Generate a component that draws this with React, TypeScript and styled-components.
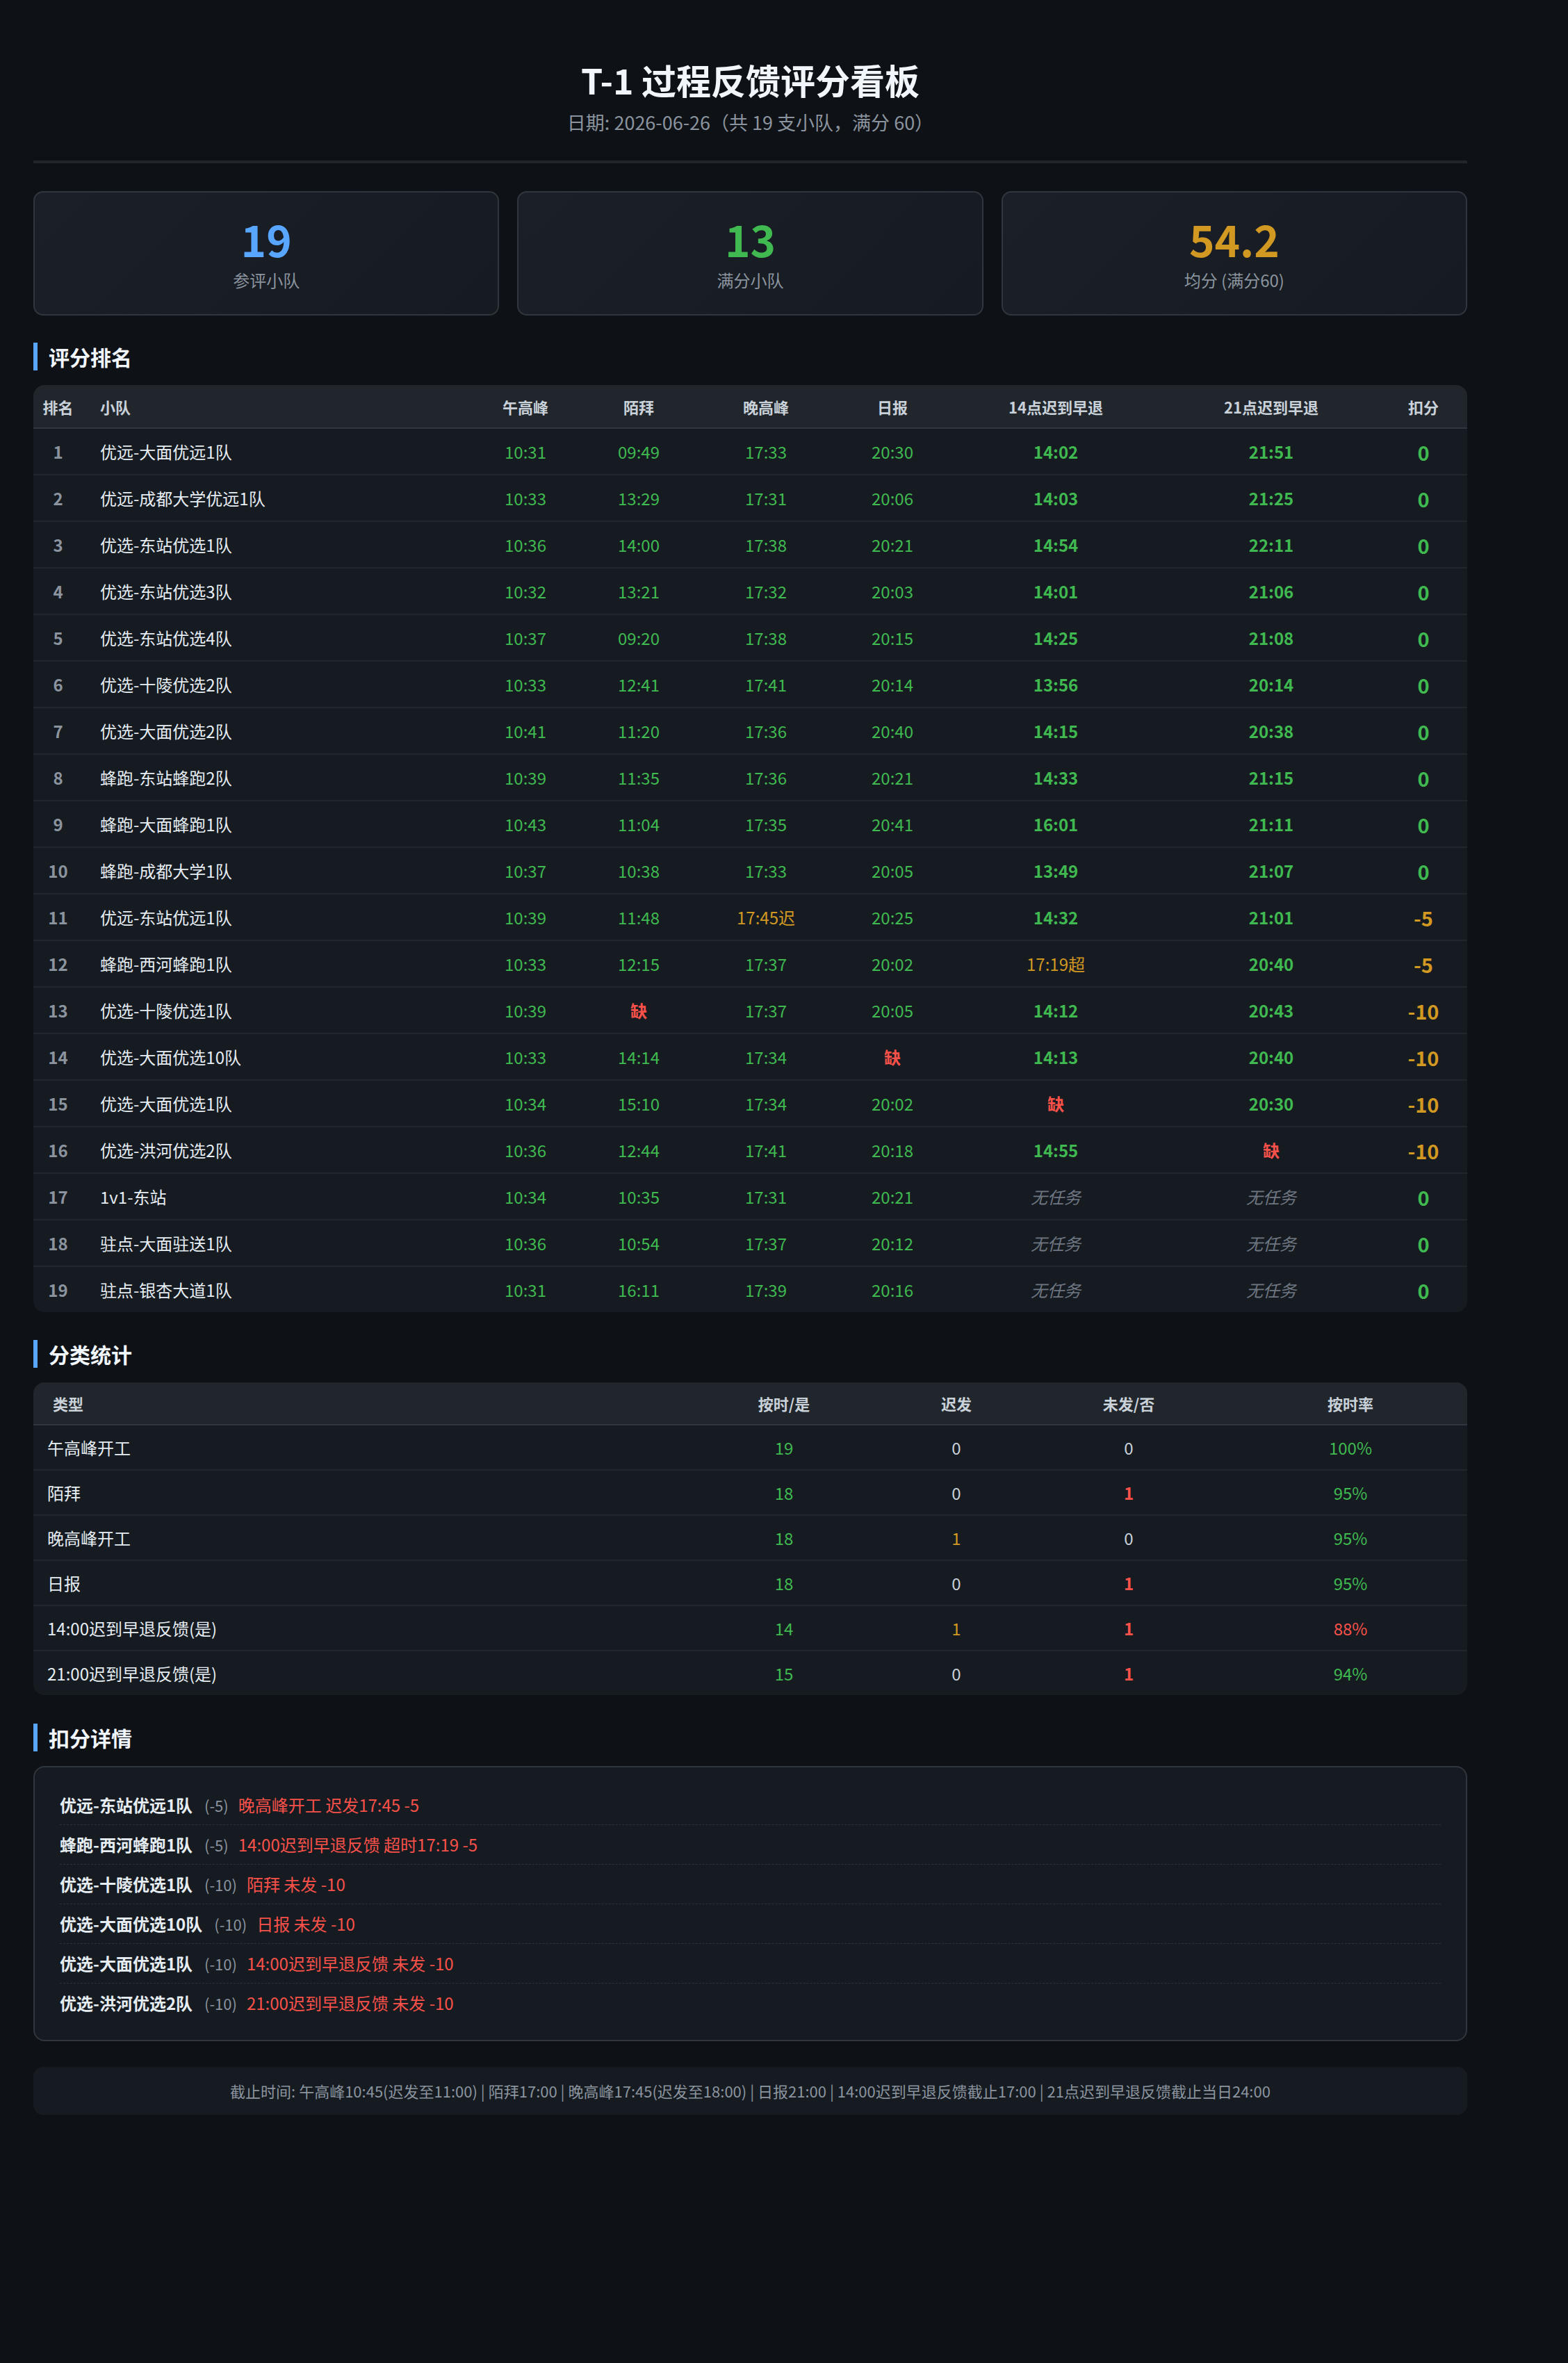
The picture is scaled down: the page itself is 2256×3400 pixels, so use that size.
import React from "react";
import styled, { createGlobalStyle } from "styled-components";

const GlobalStyle = createGlobalStyle`
  html, body {
    margin: 0;
    padding: 0;
    background: #0e1116;
    overflow: hidden;
  }
  body {
    font-family: "Noto Sans CJK SC", "Noto Sans", "Liberation Sans", sans-serif;
    color: #e6edf3;
  }
  * { box-sizing: border-box; }
`;

const C = {
  green: "#3fb950",
  orange: "#d29922",
  red: "#f85149",
  blue: "#58a6ff",
  gray: "#8b949e",
  dim: "#6e7681",
  text: "#e6edf3",
  head: "#c9d1d9",
};

const Page = styled.div`
  min-height: 3400px;
  background: #0e1116;
  padding: 0 0 0 48px;
`;

const Container = styled.div`
  width: 2063px;
`;

const Header = styled.header`
  padding: 82px 0 36px;
  border-bottom: 4px solid #21262d;
  text-align: center;
`;

const Title = styled.h1`
  margin: 0;
  font-size: 50px;
  line-height: 64px;
  font-weight: 700;
  color: #f0f6fc;
`;

const Subtitle = styled.div`
  margin-top: 11px;
  font-size: 27px;
  line-height: 38px;
  color: ${C.gray};
`;

const StatGrid = styled.div`
  margin-top: 40px;
  display: grid;
  grid-template-columns: repeat(3, 1fr);
  gap: 26px;
`;

const StatCard = styled.div`
  height: 179px;
  border: 2px solid #30363d;
  border-radius: 14px;
  background: linear-gradient(135deg, #1b2028 0%, #161b22 100%);
  padding-top: 28px;
  text-align: center;
`;

const StatValue = styled.div<{ $color: string }>`
  font-size: 62px;
  line-height: 76px;
  font-weight: 700;
  color: ${(p) => p.$color};
`;

const StatLabel = styled.div`
  margin-top: 4px;
  font-size: 24px;
  line-height: 36px;
  color: ${C.gray};
`;

const Section = styled.section<{ $mt?: number }>`
  margin-top: ${(p) => p.$mt ?? 40}px;
`;

const SectionTitle = styled.h2`
  margin: 0 0 21px;
  border-left: 6px solid ${C.blue};
  padding-left: 16px;
  font-size: 30px;
  line-height: 40px;
  font-weight: 700;
  color: #f0f6fc;
`;

const TableWrap = styled.div`
  background: #161b22;
  border-radius: 16px;
  overflow: hidden;
`;

const Table = styled.table`
  width: 100%;
  border-collapse: separate;
  border-spacing: 0;
  table-layout: fixed;
`;

const Th = styled.th<{ $align?: string; $pl?: number; $h: number }>`
  height: ${(p) => p.$h}px;
  background: #21262d;
  border-bottom: 2px solid #30363d;
  font-size: 22px;
  font-weight: 700;
  color: ${C.head};
  text-align: ${(p) => p.$align || "center"};
  padding: 0 0 0 ${(p) => p.$pl || 0}px;
  white-space: nowrap;
`;

const Tr = styled.tr<{ $h: number }>`
  td {
    height: ${(p) => p.$h}px;
    border-bottom: 2px solid #21262d;
  }
  &:last-child td {
    height: ${(p) => p.$h - 2}px;
    border-bottom: none;
  }
`;

const Td = styled.td<{
  $align?: string;
  $pl?: number;
  $color?: string;
  $weight?: number;
  $size?: number;
  $italic?: boolean;
}>`
  padding: 0 0 0 ${(p) => p.$pl || 0}px;
  text-align: ${(p) => p.$align || "center"};
  font-size: ${(p) => p.$size || 24}px;
  font-weight: ${(p) => p.$weight || 400};
  font-style: ${(p) => (p.$italic ? "italic" : "normal")};
  color: ${(p) => p.$color || C.text};
  white-space: nowrap;
`;

const DetailBox = styled.div`
  border: 2px solid #30363d;
  border-radius: 16px;
  background: #161b22;
  padding: 26px 36px 25px;
`;

const DetailItem = styled.div`
  display: flex;
  align-items: baseline;
  padding: 12px 0;
  line-height: 32px;
  &:not(:last-child) {
    border-bottom: 1px dashed #2d333b;
  }
`;

const DetailName = styled.span`
  font-size: 24px;
  font-weight: 700;
  color: ${C.text};
`;

const DetailPts = styled.span`
  margin: 0 14px 0 17px;
  font-size: 22px;
  color: ${C.gray};
`;

const DetailReason = styled.span`
  font-size: 24px;
  color: ${C.red};
`;

const Footer = styled.div`
  margin-top: 37px;
  background: #161b22;
  border-radius: 14px;
  padding: 16px;
  text-align: center;
  font-size: 22px;
  line-height: 37px;
  color: ${C.gray};
`;

type Cell = string;
type Rank = [number, string, Cell, Cell, Cell, Cell, Cell, Cell, number];

const ranks: Rank[] = [
  [1, "优远-大面优远1队", "10:31", "09:49", "17:33", "20:30", "14:02", "21:51", 0],
  [2, "优远-成都大学优远1队", "10:33", "13:29", "17:31", "20:06", "14:03", "21:25", 0],
  [3, "优选-东站优选1队", "10:36", "14:00", "17:38", "20:21", "14:54", "22:11", 0],
  [4, "优选-东站优选3队", "10:32", "13:21", "17:32", "20:03", "14:01", "21:06", 0],
  [5, "优选-东站优选4队", "10:37", "09:20", "17:38", "20:15", "14:25", "21:08", 0],
  [6, "优选-十陵优选2队", "10:33", "12:41", "17:41", "20:14", "13:56", "20:14", 0],
  [7, "优选-大面优选2队", "10:41", "11:20", "17:36", "20:40", "14:15", "20:38", 0],
  [8, "蜂跑-东站蜂跑2队", "10:39", "11:35", "17:36", "20:21", "14:33", "21:15", 0],
  [9, "蜂跑-大面蜂跑1队", "10:43", "11:04", "17:35", "20:41", "16:01", "21:11", 0],
  [10, "蜂跑-成都大学1队", "10:37", "10:38", "17:33", "20:05", "13:49", "21:07", 0],
  [11, "优远-东站优远1队", "10:39", "11:48", "17:45迟", "20:25", "14:32", "21:01", -5],
  [12, "蜂跑-西河蜂跑1队", "10:33", "12:15", "17:37", "20:02", "17:19超", "20:40", -5],
  [13, "优选-十陵优选1队", "10:39", "缺", "17:37", "20:05", "14:12", "20:43", -10],
  [14, "优选-大面优选10队", "10:33", "14:14", "17:34", "缺", "14:13", "20:40", -10],
  [15, "优选-大面优选1队", "10:34", "15:10", "17:34", "20:02", "缺", "20:30", -10],
  [16, "优选-洪河优选2队", "10:36", "12:44", "17:41", "20:18", "14:55", "缺", -10],
  [17, "1v1-东站", "10:34", "10:35", "17:31", "20:21", "无任务", "无任务", 0],
  [18, "驻点-大面驻送1队", "10:36", "10:54", "17:37", "20:12", "无任务", "无任务", 0],
  [19, "驻点-银杏大道1队", "10:31", "16:11", "17:39", "20:16", "无任务", "无任务", 0],
];

const rankCols = [71, 556, 162, 164, 202, 162, 308, 312, 126];
const rankHeads = ["排名", "小队", "午高峰", "陌拜", "晚高峰", "日报", "14点迟到早退", "21点迟到早退", "扣分"];

function cellStyle(v: string, bold: boolean) {
  if (v === "缺") return { $color: C.red, $weight: 700 };
  if (v === "无任务") return { $color: C.dim, $italic: true };
  if (v.endsWith("迟") || v.endsWith("超")) return { $color: C.orange };
  return { $color: C.green, $weight: bold ? 700 : 400 };
}

type Stat = [string, number, number, number, string];
const stats: Stat[] = [
  ["午高峰开工", 19, 0, 0, "100%"],
  ["陌拜", 18, 0, 1, "95%"],
  ["晚高峰开工", 18, 1, 0, "95%"],
  ["日报", 18, 0, 1, "95%"],
  ["14:00迟到早退反馈(是)", 14, 1, 1, "88%"],
  ["21:00迟到早退反馈(是)", 15, 0, 1, "94%"],
];
const statCols = [929, 302, 194, 302, 336];

const details: [string, string, string][] = [
  ["优远-东站优远1队", "(-5)", "晚高峰开工 迟发17:45 -5"],
  ["蜂跑-西河蜂跑1队", "(-5)", "14:00迟到早退反馈 超时17:19 -5"],
  ["优选-十陵优选1队", "(-10)", "陌拜 未发 -10"],
  ["优选-大面优选10队", "(-10)", "日报 未发 -10"],
  ["优选-大面优选1队", "(-10)", "14:00迟到早退反馈 未发 -10"],
  ["优选-洪河优选2队", "(-10)", "21:00迟到早退反馈 未发 -10"],
];

export default function App() {
  return (
    <Page>
      <GlobalStyle />
      <Container>
        <Header>
          <Title>T-1 过程反馈评分看板</Title>
          <Subtitle>日期: 2026-06-26（共 19 支小队，满分 60）</Subtitle>
        </Header>

        <StatGrid>
          <StatCard>
            <StatValue $color={C.blue}>19</StatValue>
            <StatLabel>参评小队</StatLabel>
          </StatCard>
          <StatCard>
            <StatValue $color={C.green}>13</StatValue>
            <StatLabel>满分小队</StatLabel>
          </StatCard>
          <StatCard>
            <StatValue $color={C.orange}>54.2</StatValue>
            <StatLabel>均分 (满分60)</StatLabel>
          </StatCard>
        </StatGrid>

        <Section $mt={39}>
          <SectionTitle>评分排名</SectionTitle>
          <TableWrap>
            <Table>
              <colgroup>
                {rankCols.map((w, i) => (
                  <col key={i} style={{ width: w }} />
                ))}
              </colgroup>
              <thead>
                <tr>
                  {rankHeads.map((h, i) => (
                    <Th key={h} $h={63} $align={i === 1 ? "left" : "center"} $pl={i === 1 ? 25 : 0}>
                      {h}
                    </Th>
                  ))}
                </tr>
              </thead>
              <tbody>
                {ranks.map((r) => (
                  <Tr key={r[0]} $h={67}>
                    <Td $color={C.gray} $weight={600}>
                      {r[0]}
                    </Td>
                    <Td $align="left" $pl={25}>
                      {r[1]}
                    </Td>
                    {[r[2], r[3], r[4], r[5]].map((v, i) => (
                      <Td key={i} {...cellStyle(v, false)}>
                        {v}
                      </Td>
                    ))}
                    {[r[6], r[7]].map((v, i) => (
                      <Td key={"b" + i} {...cellStyle(v, true)}>
                        {v}
                      </Td>
                    ))}
                    <Td $size={29} $weight={700} $color={r[8] === 0 ? C.green : C.orange}>
                      {r[8]}
                    </Td>
                  </Tr>
                ))}
              </tbody>
            </Table>
          </TableWrap>
        </Section>

        <Section $mt={40}>
          <SectionTitle>分类统计</SectionTitle>
          <TableWrap>
            <Table>
              <colgroup>
                {statCols.map((w, i) => (
                  <col key={i} style={{ width: w }} />
                ))}
              </colgroup>
              <thead>
                <tr>
                  <Th $h={62} $align="left" $pl={28}>
                    类型
                  </Th>
                  <Th $h={62}>按时/是</Th>
                  <Th $h={62}>迟发</Th>
                  <Th $h={62}>未发/否</Th>
                  <Th $h={62}>按时率</Th>
                </tr>
              </thead>
              <tbody>
                {stats.map((s) => (
                  <Tr key={s[0]} $h={65}>
                    <Td $align="left" $pl={20}>
                      {s[0]}
                    </Td>
                    <Td $color={C.green}>{s[1]}</Td>
                    <Td $color={s[2] > 0 ? C.orange : C.head}>{s[2]}</Td>
                    <Td $color={s[3] > 0 ? C.red : C.head} $weight={s[3] > 0 ? 700 : 400}>
                      {s[3]}
                    </Td>
                    <Td $color={parseInt(s[4]) < 90 ? C.red : C.green}>{s[4]}</Td>
                  </Tr>
                ))}
              </tbody>
            </Table>
          </TableWrap>
        </Section>

        <Section $mt={41}>
          <SectionTitle>扣分详情</SectionTitle>
          <DetailBox>
            {details.map((d) => (
              <DetailItem key={d[0]}>
                <DetailName>{d[0]}</DetailName>
                <DetailPts>{d[1]}</DetailPts>
                <DetailReason>{d[2]}</DetailReason>
              </DetailItem>
            ))}
          </DetailBox>
        </Section>

        <Footer>
          截止时间: 午高峰10:45(迟发至11:00) | 陌拜17:00 | 晚高峰17:45(迟发至18:00) | 日报21:00 | 14:00迟到早退反馈截止17:00 | 21点迟到早退反馈截止当日24:00
        </Footer>
      </Container>
    </Page>
  );
}
